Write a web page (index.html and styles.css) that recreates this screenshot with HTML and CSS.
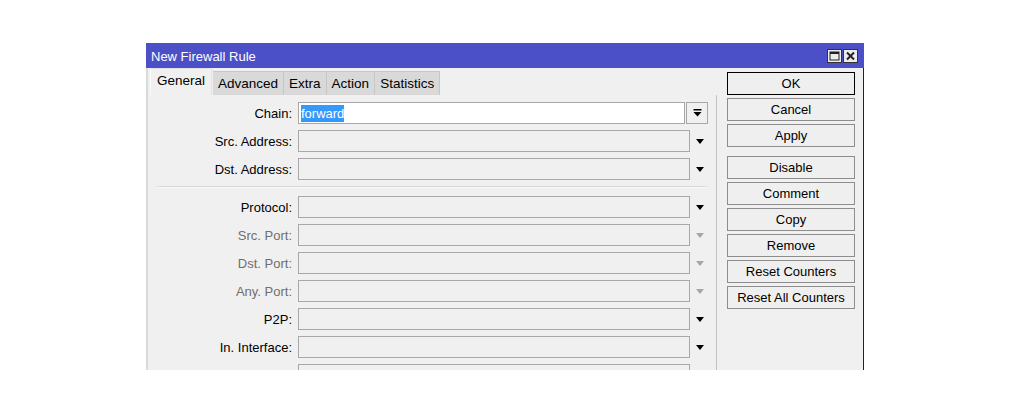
FILE: index.html
```html
<!DOCTYPE html>
<html>
<head>
<meta charset="utf-8">
<title>New Firewall Rule</title>
<link rel="stylesheet" href="styles.css">
</head>
<body>
<div class="window">
  <div class="titlebar">
    <span class="title">New Firewall Rule</span>
    <div class="tbtns">
      <span class="tbtn"><svg width="11" height="10" viewBox="0 0 11 10"><rect x="1" y="1" width="9" height="8" fill="none" stroke="#222" stroke-width="1"/><rect x="1" y="1" width="9" height="2" fill="#222"/></svg></span>
      <span class="tbtn"><svg width="11" height="10" viewBox="0 0 11 10"><path d="M2 1.5 L9 8.5 M9 1.5 L2 8.5" stroke="#222" stroke-width="2"/></svg></span>
    </div>
  </div>
  <div class="content">
    <div class="main">
      <div class="tabs">
        <span class="tab active">General</span>
        <span class="tab">Advanced</span>
        <span class="tab">Extra</span>
        <span class="tab">Action</span>
        <span class="tab">Statistics</span>
      </div>
      <div class="panel">
        <div class="row">
          <span class="label">Chain:</span>
          <span class="field white"><span class="sel">forward</span></span>
          <span class="dropbtn"><svg width="9" height="8" viewBox="0 0 9 8"><rect x="0.5" y="0" width="8" height="1.5" fill="#000"/><path d="M0.5 3 H8.5 L4.5 7.5 Z" fill="#000"/></svg></span>
        </div>
        <div class="row">
          <span class="label">Src. Address:</span>
          <span class="field"></span>
          <span class="arrow"></span>
        </div>
        <div class="row">
          <span class="label">Dst. Address:</span>
          <span class="field"></span>
          <span class="arrow"></span>
        </div>
        <div class="sep"></div>
        <div class="row">
          <span class="label">Protocol:</span>
          <span class="field"></span>
          <span class="arrow"></span>
        </div>
        <div class="row disabled">
          <span class="label">Src. Port:</span>
          <span class="field"></span>
          <span class="arrow"></span>
        </div>
        <div class="row disabled">
          <span class="label">Dst. Port:</span>
          <span class="field"></span>
          <span class="arrow"></span>
        </div>
        <div class="row disabled">
          <span class="label">Any. Port:</span>
          <span class="field"></span>
          <span class="arrow"></span>
        </div>
        <div class="row">
          <span class="label">P2P:</span>
          <span class="field"></span>
          <span class="arrow"></span>
        </div>
        <div class="row">
          <span class="label">In. Interface:</span>
          <span class="field"></span>
          <span class="arrow"></span>
        </div>
        <div class="row">
          <span class="label"></span>
          <span class="field"></span>
          <span class="arrow"></span>
        </div>
      </div>
    </div>
    <div class="side">
      <button class="btn default">OK</button>
      <button class="btn">Cancel</button>
      <button class="btn group-end">Apply</button>
      <button class="btn">Disable</button>
      <button class="btn">Comment</button>
      <button class="btn">Copy</button>
      <button class="btn">Remove</button>
      <button class="btn">Reset Counters</button>
      <button class="btn">Reset All Counters</button>
    </div>
  </div>
</div>
</body>
</html>
```
FILE: styles.css
```css
html, body {
  margin: 0;
  padding: 0;
  background: #ffffff;
}
body {
  font-family: "Liberation Sans", Arial, sans-serif;
  font-size: 13px;
  color: #000;
}
.window {
  margin: 43px 0 0 146px;
  width: 718px;
  height: 327px;
  overflow: hidden;
  background: #f0f0f0;
  display: flex;
  flex-direction: column;
}
.titlebar {
  height: 25px;
  flex: none;
  background: #4b50c8;
  color: #fff;
  display: flex;
  align-items: center;
  justify-content: space-between;
  padding: 0 6px 0 5px;
  font-size: 13px;
}
.title {
  padding-top: 2px;
}
.tbtns {
  display: flex;
  gap: 1px;
}
.tbtn {
  width: 13px;
  height: 12px;
  border: 1px solid #333;
  background: #ececec;
  display: flex;
  align-items: center;
  justify-content: center;
}
.content {
  flex: 1;
  display: flex;
  border-left: 2px solid #dadada;
  border-right: 1px solid #222;
}
.main {
  width: 569px;
  display: flex;
  flex-direction: column;
}
.tabs {
  height: 27px;
  display: flex;
  align-items: flex-end;
  padding-left: 2px;
}
.tab {
  height: 24px;
  box-sizing: border-box;
  padding: 0 5px;
  background: #d9d9d9;
  border: 1px solid #c6c6c6;
  border-bottom: none;
  border-left: none;
  font-size: 13.5px;
  line-height: 24px;
  color: #000;
}
.tab.active {
  height: 27px;
  background: #f0f0f0;
  border: 1px solid #e2e2e2;
  border-bottom: none;
  border-left-color: #fafafa;
  padding: 0 6px;
  line-height: 24px;
  margin-right: 1px;
}
.panel {
  flex: 1;
  border-right: 1px solid #c3c3c3;
  padding-top: 7px;
}
.row {
  display: flex;
  align-items: center;
  height: 22px;
  margin-bottom: 6px;
}
.label {
  width: 144px;
  text-align: right;
  margin-right: 6px;
  white-space: nowrap;
  padding-top: 1px;
}
.disabled .label {
  color: #6f6f6f;
}
.field {
  width: 392px;
  height: 22px;
  box-sizing: border-box;
  border: 1px solid #a8a8a8;
  background: #f0f0f0;
}
.field.white {
  width: 387px;
  background: #fff;
  padding: 2px 0 0 2px;
  line-height: 17px;
}
.sel {
  display: inline-block;
  background: #3399ff;
  color: #fff;
  height: 17px;
}
.dropbtn {
  width: 22px;
  height: 22px;
  box-sizing: border-box;
  margin-left: 1px;
  border: 1px solid #a8a8a8;
  background: #f0f0f0;
  display: flex;
  align-items: center;
  justify-content: center;
}
.arrow {
  width: 20px;
  height: 22px;
  display: flex;
  align-items: center;
  justify-content: center;
}
.arrow::before {
  content: "";
  width: 0;
  height: 0;
  border-left: 4.5px solid transparent;
  border-right: 4.5px solid transparent;
  border-top: 5px solid #000;
  margin-top: 1px;
}
.disabled .arrow::before {
  border-top-color: #a6a6a6;
}
.sep {
  width: 550px;
  margin: 2px 0 8px 9px;
  border-top: 1px solid #d8d8d8;
  border-bottom: 1px solid #fafafa;
}
.side {
  width: 146px;
  padding: 4px 0 0 10px;
  box-sizing: border-box;
  display: flex;
  flex-direction: column;
}
.btn {
  width: 128px;
  height: 23px;
  box-sizing: border-box;
  margin: 0 0 3px 0;
  padding: 1px 0 0 0;
  border: 1px solid #8d8d8d;
  background: #efefef;
  font-family: inherit;
  font-size: 13px;
  color: #000;
  line-height: 20px;
  text-align: center;
}
.btn.default {
  border-color: #000;
}
.btn.group-end {
  margin-bottom: 9px;
}
```
